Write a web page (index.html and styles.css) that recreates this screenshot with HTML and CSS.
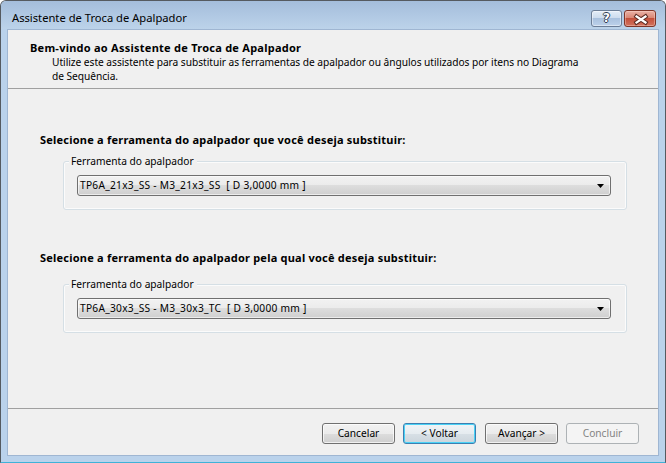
FILE: index.html
```html
<!DOCTYPE html>
<html lang="pt">
<head>
<meta charset="utf-8">
<title>Assistente de Troca de Apalpador</title>
<link rel="stylesheet" href="styles.css">
</head>
<body>
<div class="window">
  <div class="titlebar">
    <span class="title">Assistente de Troca de Apalpador</span>
    <div class="caption-btns">
      <div class="cap help"><span class="qmark">?</span></div>
      <div class="cap close">
        <svg width="31" height="17" viewBox="0 0 31 17">
          <path d="M11.5 5.5 L20.5 11.5 M20.5 5.5 L11.5 11.5" stroke="#5a2a22" stroke-width="4.2" stroke-linecap="square" fill="none"/>
          <path d="M11.5 5.5 L20.5 11.5 M20.5 5.5 L11.5 11.5" stroke="#ffffff" stroke-width="2.2" stroke-linecap="square" fill="none"/>
        </svg>
      </div>
    </div>
  </div>
  <div class="client">
    <div class="header">
      <div class="h-title">Bem-vindo ao Assistente de Troca de Apalpador</div>
      <div class="h-sub">Utilize este assistente para substituir as ferramentas de apalpador ou ângulos utilizados por itens no Diagrama<br>de Sequência.</div>
    </div>
    <div class="main">
      <div class="label first">Selecione a ferramenta do apalpador que você deseja substituir:</div>
      <div class="group g1">
        <span class="legend">Ferramenta do apalpador</span>
        <div class="combo">
          <span class="combo-text">TP6A_21x3_SS - M3_21x3_SS&nbsp; [ D 3,0000 mm ]</span>
          <svg class="arrow" width="7" height="4" viewBox="0 0 7 4"><path d="M0 0 H7 L3.5 4 Z" fill="#000"/></svg>
        </div>
      </div>
      <div class="label second">Selecione a ferramenta do apalpador pela qual você deseja substituir:</div>
      <div class="group g2">
        <span class="legend">Ferramenta do apalpador</span>
        <div class="combo">
          <span class="combo-text">TP6A_30x3_SS - M3_30x3_TC&nbsp; [ D 3,0000 mm ]</span>
          <svg class="arrow" width="7" height="4" viewBox="0 0 7 4"><path d="M0 0 H7 L3.5 4 Z" fill="#000"/></svg>
        </div>
      </div>
    </div>
    <div class="footer">
      <div class="btn">Cancelar</div>
      <div class="btn default">&lt; Voltar</div>
      <div class="btn next">Avançar &gt;</div>
      <div class="btn disabled">Concluir</div>
    </div>
  </div>
</div>
</body>
</html>
```
FILE: styles.css
```css
html, body {
  margin: 0;
  padding: 0;
  background: #ffffff;
}
body {
  font-family: "Noto Sans", "Open Sans", sans-serif;
  font-size: 10.2px;
  color: #000;
}
.window {
  width: 666px;
  height: 463px;
  box-sizing: border-box;
  border: 1px solid #555a60;
  border-bottom-color: #3fb2d8;
  border-radius: 6px 6px 0 0;
  background: #bad2eb;
  padding: 0 6px 6px;
  display: flex;
  flex-direction: column;
}
.titlebar {
  height: 28px;
  margin: 0 -6px;
  padding: 9px 9px 0 11px;
  box-sizing: border-box;
  display: flex;
  justify-content: space-between;
  align-items: flex-start;
  background: linear-gradient(#a4bddb, #bcd3ea);
  border-radius: 5px 5px 0 0;
}
.title {
  font-size: 11.2px;
  line-height: 16px;
  color: #000;
}
.caption-btns {
  display: flex;
  gap: 2px;
}
.cap {
  width: 31px;
  height: 17px;
  box-sizing: border-box;
  border-radius: 3px;
  display: flex;
  align-items: center;
  justify-content: center;
  position: relative;
  overflow: hidden;
}
.cap.help {
  border: 1px solid #6b7d96;
  background: linear-gradient(#e4edf8 0%, #cddcee 45%, #a9c1de 50%, #bdd1ea 100%);
  box-shadow: inset 0 0 0 1px rgba(255,255,255,0.45);
}
.qmark {
  font-family: "DejaVu Sans", sans-serif;
  font-weight: bold;
  font-size: 12px;
  line-height: 15px;
  color: #fff;
  text-shadow: 1px 0 #2e3d52, -1px 0 #2e3d52, 0 1px #2e3d52, 0 -1px #2e3d52;
}
.cap.close {
  width: 32px;
  border: 1px solid #7e3528;
  background: linear-gradient(#eab2a6 0%, #d98775 45%, #c4503b 50%, #d2735f 100%);
  box-shadow: inset 0 0 0 1px rgba(255,220,210,0.4);
}
.cap.close svg {
  position: absolute;
  left: 0;
  top: 0;
}
.client {
  flex: 1;
  background: #f0f0f0;
  border: 1px solid #9fb6d2;
  display: flex;
  flex-direction: column;
}
.header {
  height: 59px;
  box-sizing: border-box;
  padding: 10px 0 0 22px;
  border-bottom: 1px solid #a0a0a0;
}
.h-title {
  font-weight: bold;
  font-size: 11px;
  letter-spacing: 0.25px;
  line-height: 15px;
}
.h-sub {
  margin-left: 22px;
  line-height: 14px;
  letter-spacing: -0.04px;
}
.main {
  display: flex;
  flex-direction: column;
  padding-top: 43px;
}
.label {
  font-weight: bold;
  font-size: 11px;
  letter-spacing: 0.22px;
  line-height: 15px;
  padding-left: 32px;
}
.label.second {
  margin-top: 40px;
}
.group {
  position: relative;
  margin: 14px 31px 0 55px;
  padding: 13px 15px 13px 13px;
  border: 1px solid #d5dfe5;
  border-radius: 3px;
  box-shadow: inset 0 0 0 1px #fbfbfb;
}
.group.g2 {
  margin-top: 19px;
}
.legend {
  position: absolute;
  left: 5px;
  top: -9px;
  padding: 0 3px 0 2px;
  background: #f0f0f0;
  line-height: 16px;
}
.combo {
  height: 21px;
  box-sizing: border-box;
  border: 1px solid #707070;
  border-radius: 3px;
  background: linear-gradient(#f2f2f2 0%, #ebebeb 50%, #dddddd 50%, #cfcfcf 100%);
  box-shadow: inset 0 0 0 1px rgba(255,255,255,0.6);
  display: flex;
  align-items: center;
  justify-content: space-between;
  padding: 0 6px 0 2px;
}
.combo-text {
  line-height: 17px;
  white-space: pre;
  letter-spacing: 0.26px;
}
.arrow {
  display: block;
}
.footer {
  margin-top: auto;
  height: 47px;
  box-sizing: border-box;
  border-top: 1px solid #a0a0a0;
  padding: 14px 19px 0 0;
  display: flex;
  justify-content: flex-end;
  gap: 8px;
}
.btn {
  width: 73px;
  height: 21px;
  box-sizing: border-box;
  border: 1px solid #707070;
  border-radius: 3px;
  background: linear-gradient(#f2f2f2 0%, #ebebeb 50%, #dddddd 50%, #cfcfcf 100%);
  box-shadow: inset 0 0 0 1px rgba(255,255,255,0.7);
  display: flex;
  align-items: center;
  justify-content: center;
  line-height: 17px;
}
.btn.default {
  border-color: #3c7fb1;
  box-shadow: inset 0 0 0 1px #4ad2f6;
  background: linear-gradient(#f0f4f7 0%, #e6ecf0 50%, #d8e0e6 50%, #cbd5dc 100%);
}
.btn.next {
  margin-left: 1px;
}
.btn.disabled {
  border-color: #adb2b5;
  background: #f4f4f4;
  box-shadow: none;
  color: #838383;
}
```
